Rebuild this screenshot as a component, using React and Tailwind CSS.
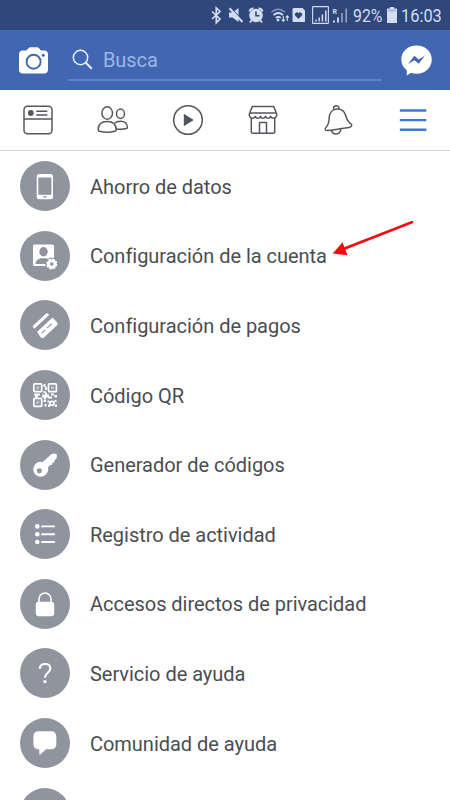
import React from 'react';

const icons = {
    phone: (
        <>
            <rect x="16.700" y="13" width="16.300" height="25.300" rx="2.500" fill="#fff" />
            <rect x="18.300" y="16.500" width="13.100" height="17.300" fill="#8f949e" />
            <rect x="23" y="35.200" width="4" height="1.400" rx="0.700" fill="#8f949e" />
        </>
    ),
    account: (
        <>
            <rect x="13" y="13.500" width="21" height="21.500" rx="1.500" fill="#fff" />
            <ellipse cx="23.500" cy="20.800" rx="4.200" ry="4.700" fill="#8f949e" />
            <path d="M15.500 33c0-3.800 3-5.300 5.500-5.800h5c1.500.3 3 .8 4 1.800L27 33z" fill="#8f949e" />
            <circle cx="31.800" cy="33" r="6.400" fill="#8f949e" />
            <circle cx="31.800" cy="33" r="3.300" fill="none" stroke="#fff" strokeWidth="3" />
            <circle cx="31.800" cy="33" r="4.700" fill="none" stroke="#fff" strokeWidth="1.700" strokeDasharray="2.100 1.590" />
        </>
    ),
    card: (
        <>
            <path d="M13.500 25.800L26 14.200q1-.9 2-.2l.8.800L14.500 28.200l-1-1q-.6-.7 0-1.400z" fill="#fff" stroke="#fff" strokeWidth="1" strokeLinejoin="round" />
            <path d="M18 32L32.500 18.500l4 4.300q.9 1 0 2L23.500 37q-1 .9-2 0z" fill="#fff" stroke="#fff" strokeWidth="1.500" strokeLinejoin="round" />
            <path d="M21.500 33.300l3.800-3.500M27 28.200l4.800-4.500" stroke="#8f949e" strokeWidth="1.100" />
        </>
    ),
    qr: (
        <>
            <g fill="none" stroke="#fff" strokeWidth="1.700">
                <rect x="13.800" y="13.800" width="7.900" height="7.900" rx="1" />
                <rect x="28.500" y="13.800" width="7.900" height="7.900" rx="1" />
                <rect x="13.800" y="28.400" width="7.900" height="7.900" rx="1" />
            </g>
            <g fill="#fff">
                <rect x="16.300" y="16.300" width="2.900" height="2.900" opacity=".45" />
                <rect x="31" y="16.300" width="2.900" height="2.900" opacity=".45" />
                <rect x="16.300" y="30.900" width="2.900" height="2.900" opacity=".45" />
                <path d="M23.500 14h2v3h-2zM25 17h2v3h-2zM23.500 21h2v2h-2zM14 23.500h6v2h-2v2h-3v-2h-1zM22 24.500h3v-2h2v2h2v2h3v2h-4v-1h-2v2h-2v-2h-2zM31 23.500h3v2h-3zM34.500 25h2.500v2.500h-2.500zM23.500 30h2.500v2h-2.500zM24.500 34h2v2.500h-2zM27.500 30.500h2v2h-2zM28 34.500h2V37h-2zM34.500 30h2v2h-2zM34.800 34.500H37V37h-2.200z" />
            </g>
            <circle cx="32" cy="33.300" r="2" fill="none" stroke="#fff" strokeWidth="1.700" />
        </>
    ),
    key: (
        <>
            <path d="M22.500 22.300 31.300 14.300q.6-.6 1.500-.6h2.900q1.100 0 1.100 1.100v2.700q0 .6-.5 1l-1.600 1.700-.3 2.200-2 .2-.3 2.200-2 .2-2.500 3z" fill="#fff" />
            <circle cx="20.700" cy="29.200" r="7.500" fill="#fff" />
            <circle cx="19.300" cy="30.800" r="2.500" fill="#8f949e" />
        </>
    ),
    list: (
        <>
            <g fill="#fff">
                <circle cx="17.300" cy="17.400" r="2.300" />
                <circle cx="17.300" cy="25.300" r="2.300" />
                <circle cx="17.300" cy="33" r="2.300" />
            </g>
            <path d="M22 17.400h12.200M22 25.300h12.200M22 33h12.200" stroke="#fff" strokeWidth="1.900" strokeLinecap="round" />
        </>
    ),
    lock: (
        <>
            <path d="M19 25v-5a6 6 0 0 1 12 0v5" fill="none" stroke="#fff" strokeWidth="1.600" />
            <rect x="15.800" y="22.800" width="18.400" height="14.500" rx="3.200" fill="#fff" />
        </>
    ),
    help: (
        <>
            <path d="M19.700 20.800c.2-3 2.300-4.800 5.300-4.800 3.100 0 5.300 1.700 5.300 4.500 0 4.300-5.300 4.400-5.300 9.300" fill="none" stroke="#fff" strokeWidth="2.100" />
            <circle cx="24.900" cy="33.600" r="1.700" fill="#fff" />
        </>
    ),
    chat: (
        <path d="M18.500 13.300h12.800c3.400 0 5 2 5 5.200v7.500c0 3.300-1.900 5.300-5.200 5.300h-5l-5.800 5.200q-1 .7-1-.5v-4.700c-3.800 0-5.900-2-5.900-5.300v-7.500c0-3.200 1.700-5.200 5.100-5.200z" fill="#fff" />
    ),
};

const menuItems = [
    { label: 'Ahorro de datos', icon: 'phone' },
    { label: 'Configuración de la cuenta', icon: 'account', arrow: true },
    { label: 'Configuración de pagos', icon: 'card' },
    { label: 'Código QR', icon: 'qr' },
    { label: 'Generador de códigos', icon: 'key' },
    { label: 'Registro de actividad', icon: 'list' },
    { label: 'Accesos directos de privacidad', icon: 'lock' },
    { label: 'Servicio de ayuda', icon: 'help' },
    { label: 'Comunidad de ayuda', icon: 'chat' },
    { label: '', icon: null },
];

function StatusBar() {
    return (
        <div className="flex h-[30px] shrink-0 items-center bg-[#2f477b] pl-[210px] text-[#d3dcf0]">
            {/* Bluetooth, mute, alarm, wifi, heart card, both signals */}
            <svg width="140" height="30" viewBox="210 0 140 30" fill="none" stroke="currentColor" className="shrink-0">
                <path d="M212 11.500l8 7.500-3.700 3.700V8l3.700 3.500-8 7.500" strokeWidth="1.700" />
                <path d="M229 12.500h3.500l6-4.500v14l-6-4.500H229z" fill="currentColor" stroke="none" />
                <path d="M230 7l14 15.500" stroke="#2f477b" strokeWidth="1.500" />
                <path d="M229.500 8.300l13 13.700" strokeWidth="2" />
                <circle cx="256" cy="15.500" r="6.800" fill="currentColor" stroke="none" />
                <path d="M249.500 11.500a4 4 0 0 1 4-3M262.500 11.500a4 4 0 0 0-4-3M251.500 20.500l-1.500 2M260.500 20.500l1.500 2" strokeWidth="2" />
                <path d="M256 11.500v4.200h3.500" stroke="#2f477b" strokeWidth="1.600" />
                <path d="M271.500 12q6.500-5.500 13.500 0" strokeWidth="1.500" opacity=".55" />
                <path d="M273.500 15q4.800-4 9.500 0M275.800 17.800q2.500-2 5 0" strokeWidth="1.700" />
                <circle cx="278" cy="20" r="1.400" fill="currentColor" stroke="none" />
                <path d="M283.300 16v5M281.800 19.500l1.500 1.800 1.500-1.800M287.300 21v-5M285.800 17.700l1.500-1.800 1.500 1.800" strokeWidth="1.100" />
                <path d="M294 8h8.500l2.500 2.500V21q0 1-1 1h-10.500q-1 0-1-1V9q0-1 1.500-1z" fill="currentColor" stroke="none" />
                <path d="M298.500 19l-3.400-3.500a2 2 0 0 1 3.400-2.200 2 2 0 0 1 3.400 2.200z" fill="#2f477b" stroke="none" />
                <rect x="312.600" y="6.600" width="15.800" height="16.800" rx="0.500" strokeWidth="1.100" />
                <path d="M316 19.500v2M319.200 17.500v4M322.400 14.500v7M325.800 10.500v11" strokeWidth="1.500" />
                <path d="M334 20.500v2M338 17.500v5" strokeWidth="1.900" />
                <path d="M342 13v9.500M346.200 8.500v14" strokeWidth="1.300" opacity=".75" />
                <text x="332.500" y="13.800" fontSize="7" fontWeight="700" fill="currentColor" stroke="none">R</text>
            </svg>
            <span className="ml-[3px] w-[31px] origin-left translate-y-px scale-x-[0.880] whitespace-nowrap text-[18px] leading-[30px]">92%</span>
            <svg width="10" height="16" viewBox="0 0 10 16" className="ml-[3px] shrink-0" fill="currentColor">
                <path d="M3 0h4v1.500h3V16H0V1.500h3z" />
                <path d="M1 2.500h8v2H1z" fill="#2f477b" opacity=".25" />
            </svg>
            <span className="ml-[4px] w-[40px] origin-left translate-y-px scale-x-[0.910] whitespace-nowrap text-[18px] leading-[30px]">16:03</span>
        </div>
    );
}

function SearchHeader() {
    return (
        <div className="flex h-[60px] shrink-0 items-center bg-[#4167b2] pl-[19px]">
            <svg width="29" height="27" viewBox="0 0 29 27" className="shrink-0">
                <path d="M4 3.500h3.500l1.600-2Q10.200.3 11.800.3h5.800q1.600 0 2.700 1.200l1.600 2H25q4 0 4 4V22.500q0 4-4 4H4q-4 0-4-4V7.500q0-4 4-4z" fill="#fff" />
                <circle cx="14.600" cy="14.700" r="7" fill="none" stroke="#4167b2" strokeWidth="1.900" />
                <circle cx="24.200" cy="8.300" r="1.500" fill="#4167b2" />
            </svg>
            <div className="ml-5 mt-[1px] flex h-[41px] w-[314px] items-center border-b-2 border-[#5a83ca] pl-[4px]">
                <svg width="21" height="21" viewBox="0 0 21 21" fill="none" stroke="#e9effa" className="shrink-0">
                    <circle cx="8.500" cy="8.500" r="7.200" strokeWidth="1.500" />
                    <path d="M13.500 13.500l6.300 6.300" strokeWidth="2" />
                </svg>
                <span className="ml-[10px] text-[20px] tracking-[-0.100px] text-[#9db6e4]">Busca</span>
            </div>
            <svg width="31" height="31" viewBox="0 0 31 31" className="ml-[19px] shrink-0">
                <path d="M15.500.5C24 .5 30.800 6.500 30.800 14.500S24 28.800 15.500 28.800q-3 0-5.400-1L5.800 30.500v-5.300C2.500 22.800.3 19 .3 14.500.3 6.500 7 .5 15.500.5z" fill="#fff" />
                <path d="M7 19l6.500-8.300 4.200 3.800 6.300-4L17.700 18.800l-4.200-3.500z" fill="#4167b2" />
            </svg>
        </div>
    );
}

function TabBar() {
    return (
        <div className="grid h-[61px] shrink-0 grid-cols-6 items-center border-b border-[#d2d4d6] bg-white text-[#54575b] [&>svg]:mx-auto">
            <svg width="32" height="32" viewBox="0 0 32 32" fill="none" stroke="currentColor" strokeWidth="1.500">
                <rect x="2" y="2.200" width="28" height="27.600" rx="3.500" />
                <path d="M2 15h28M14.300 7.200h11M14.300 11h11" />
                <circle cx="8.800" cy="9" r="2.900" fill="currentColor" stroke="none" />
            </svg>
            <svg width="32" height="32" viewBox="0 0 32 32" fill="none" stroke="currentColor" strokeWidth="1.500">
                <ellipse cx="10.200" cy="9" rx="5.300" ry="6.200" />
                <ellipse cx="23.500" cy="9.700" rx="4" ry="4.700" />
                <path d="M1.200 25.500c0-5 3.300-8 9-8s8.800 3 9 8q0 1.500-1.200 1.800c-4.500 1.200-11 1.200-15.600 0q-1.200-.3-1.200-1.800z" />
                <path d="M17.500 19.300c1.300-1.300 3.500-2 6-2 4.500 0 6.800 2.500 6.900 6.200q0 .9-1 1.100c-3 .7-7 .8-10.300.3" />
            </svg>
            <svg width="32" height="32" viewBox="0 0 32 32" fill="none" stroke="currentColor" strokeWidth="1.500">
                <circle cx="16" cy="16" r="14.300" />
                <path d="M11.800 9.800v12.400L21.800 16z" fill="currentColor" stroke="none" />
            </svg>
            <svg width="32" height="32" viewBox="0 0 32 32" fill="none" stroke="currentColor" strokeWidth="1.500" strokeLinejoin="round">
                <path d="M5.300 2.500h21.400l2.600 6.500q.7 1.500.2 3c-.8 3-4.500 3-5.800.3-1 2.700-4.200 2.700-5.200 0-1 2.700-4 2.700-5 0-1 2.700-4.200 2.700-5.200 0-1.300 2.700-5 2.700-5.800-.3q-.5-1.500.2-3zM2.700 9h26.600M4.300 14.300V28q0 1.300 1.300 1.300h20.800q1.300 0 1.300-1.300V14.300M12.500 29.300V18.500h7v10.800" />
            </svg>
            <svg width="32" height="32" viewBox="0 0 32 32" fill="none" stroke="currentColor" strokeWidth="1.500" strokeLinejoin="round">
                <path d="M4 23.500c3.200-3.200 3-7.200 3.300-10.700C7.700 8.500 10.700 5.300 15 5c4.500-.2 7.500 2.500 8.700 6.500 1 3.300 1.800 6.500 5.200 8.300q1.300.8.700 2-.5 1.300-1.700 1.500c-7.500 1.200-15.500 2.500-23 3.300q-1.500 0-1.700-1.200-.2-1.100.8-1.900z" />
                <path d="M11.700 5.500c-.7-2.200.5-3.800 2.500-3.800s3 1.400 2.700 3.500M9.300 26c.7 2.600 2.500 4.200 5 4.100 2.600-.2 4.300-2.200 4.500-5.300" />
            </svg>
            <svg width="28" height="32" viewBox="0 0 28 32" stroke="#3b79dc" strokeWidth="2.400">
                <path d="M.8 6.500h26.500M.8 16.100h26.500M.8 25.700h26.500" />
            </svg>
        </div>
    );
}

function MenuRow({ item }) {
    return (
        <div className="relative flex h-[69.6px] shrink-0 items-center pl-5">
            <div className="size-[50px] shrink-0 rounded-full bg-[#8f949e]">
                <svg width="50" height="50" viewBox="0 0 50 50">{item.icon && icons[item.icon]}</svg>
            </div>
            <span className="ml-5 whitespace-nowrap pt-px text-[20px] tracking-[-0.030px] text-[#4b4d51]">{item.label}</span>
            {item.arrow && (
                <svg width="82" height="36" viewBox="0 0 82 36" className="absolute left-[332px] top-0">
                    <path d="M12 27.700L81 .8" stroke="#f60a0e" strokeWidth="2.700" />
                    <path d="M.7 32.500l9.800-11.300L15.500 34.200z" fill="#f60a0e" />
                </svg>
            )}
        </div>
    );
}

export default function App() {
    return (
        <div className="flex h-[800px] w-[450px] flex-col overflow-hidden bg-white font-['Roboto',sans-serif]">
            <StatusBar />
            <SearchHeader />
            <TabBar />
            <div className="flex min-h-0 flex-1 flex-col overflow-hidden pt-[0.500px]">
                {menuItems.map((item, idx) => (
                    <MenuRow key={idx} item={item} />
                ))}
            </div>
        </div>
    );
}
